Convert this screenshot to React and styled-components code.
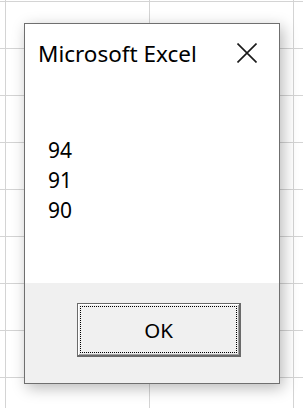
import React from 'react';
import styled, { createGlobalStyle } from 'styled-components';

const GlobalStyle = createGlobalStyle`
  html, body {
    margin: 0;
    padding: 0;
  }
  body {
    width: 303px;
    height: 408px;
    overflow: hidden;
    font-family: "Noto Sans", "Open Sans", sans-serif;
    background-color: #fff;
    background-image:
      linear-gradient(to right, #d4d4d4 1px, transparent 1px),
      linear-gradient(to bottom, #d4d4d4 1px, transparent 1px);
    background-size: 144px 47px;
    background-position: 5px 1px;
  }
`;

const Sheet = styled.div`
  padding: 23px 0 0 24px;
`;

const Dialog = styled.div`
  width: 254px;
  height: 359px;
  border: 1px solid #6f6f6f;
  background: #fff;
  display: flex;
  flex-direction: column;
  box-shadow: 3px 4px 14px rgba(0, 0, 0, 0.28);
`;

const TitleBar = styled.div`
  display: flex;
  align-items: center;
  justify-content: space-between;
  height: 58px;
  padding: 0 22px 0 13px;
`;

const Title = styled.span`
  font-size: 22.5px;
  color: #000;
  padding-top: 1px;
`;

const CloseButton = styled.button`
  border: none;
  background: none;
  padding: 0;
  width: 20px;
  height: 20px;
  display: flex;
  svg { display: block; }
`;

const Body = styled.div`
  flex: 1;
  padding: 53px 0 0 23px;
`;

const Line = styled.div`
  font-size: 21px;
  line-height: 30px;
  color: #000;
`;

const Footer = styled.div`
  height: 100px;
  background: #f0f0f0;
  padding: 20px 0 0 52px;
  box-sizing: border-box;
`;

const OkButton = styled.button`
  width: 164px;
  height: 54px;
  box-sizing: border-box;
  background: #f0f0f0;
  border: 1px solid #6a6a6a;
  border-right-width: 2px;
  border-bottom-width: 2px;
  box-shadow: inset 1px 1px 0 #fff, inset -1px -1px 0 #a0a0a0;
  padding: 2px;
  font-family: "Noto Sans", "Open Sans", sans-serif;
  font-size: 20.5px;
  color: #000;
  cursor: default;
`;

const FocusRing = styled.span`
  display: flex;
  align-items: center;
  justify-content: center;
  height: 100%;
  box-sizing: border-box;
  border: 1px dotted #000;
`;

export default function App() {
  return (
    <>
      <GlobalStyle />
      <Sheet>
        <Dialog>
          <TitleBar>
            <Title>Microsoft Excel</Title>
            <CloseButton aria-label="Close">
              <svg width="20" height="20" viewBox="0 0 20 20">
                <path d="M0.5 0.5 L19.5 19.5 M19.5 0.5 L0.5 19.5" stroke="#1a1a1a" strokeWidth="1.6" fill="none" />
              </svg>
            </CloseButton>
          </TitleBar>
          <Body>
            <Line>94</Line>
            <Line>91</Line>
            <Line>90</Line>
          </Body>
          <Footer>
            <OkButton>
              <FocusRing>OK</FocusRing>
            </OkButton>
          </Footer>
        </Dialog>
      </Sheet>
    </>
  );
}
